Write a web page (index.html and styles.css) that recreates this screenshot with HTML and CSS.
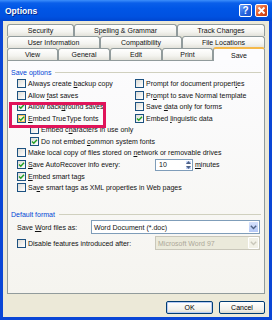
FILE: index.html
```html
<!DOCTYPE html>
<html lang="en">
<head>
    <meta charset="UTF-8">
    <title>Options</title>
    <link rel="stylesheet" href="styles.css">
</head>
<body>
    <div class="window">
        <div class="titlebar">
            <span class="title">Options</span>
            <div class="caption-btns">
                <span class="cbtn help">?</span>
                <span class="cbtn close">
                    <svg width="9" height="9" viewBox="0 0 9 9"><path d="M1.5 1.5 L7.5 7.5 M7.5 1.5 L1.5 7.5" stroke="#fff" stroke-width="1.8"/></svg>
                </span>
            </div>
        </div>

        <div class="client">
            <div class="tabrows">
                <div class="tabrow">
                    <div class="tab" style="width:67px">Security</div>
                    <div class="tab" style="width:103px">Spelling &amp; Grammar</div>
                    <div class="tab" style="width:88px">Track Changes</div>
                </div>
                <div class="tabrow">
                    <div class="tab" style="width:93px">User Information</div>
                    <div class="tab" style="width:82px">Compatibility</div>
                    <div class="tab" style="width:83px">File Locations</div>
                </div>
                <div class="tabrow">
                    <div class="tab" style="width:51px">View</div>
                    <div class="tab" style="width:52px">General</div>
                    <div class="tab" style="width:52px">Edit</div>
                    <div class="tab" style="width:51px">Print</div>
                    <div class="tab selected" style="width:52px">Save</div>
                </div>
            </div>

            <div class="panel">
                <div class="group-title">Save options</div>
                <div class="group">
                    <div class="cols">
                        <div class="col">
                            <div class="row"><span class="cb"></span><span>Always create <u>b</u>ackup copy</span></div>
                            <div class="row"><span class="cb"></span><span>Allow <u>f</u>ast saves</span></div>
                            <div class="row"><span class="cb checked"><svg viewBox="0 0 7 7"><path d="M1 3.4 L2.8 5.2 L6 1.8" fill="none" stroke="#21a121" stroke-width="1.4"/></svg></span><span>Allow back<u>g</u>round saves</span></div>
                            <div class="row"><span class="cb checked hover"><svg viewBox="0 0 7 7"><path d="M1 3.4 L2.8 5.2 L6 1.8" fill="none" stroke="#21a121" stroke-width="1.4"/></svg></span><span><u>E</u>mbed TrueType fonts</span></div>
                        </div>
                        <div class="col">
                            <div class="row"><span class="cb"></span><span>Prompt for document propert<u>i</u>es</span></div>
                            <div class="row"><span class="cb"></span><span>Pr<u>o</u>mpt to save Normal template</span></div>
                            <div class="row"><span class="cb"></span><span>Save <u>d</u>ata only for forms</span></div>
                            <div class="row"><span class="cb checked"><svg viewBox="0 0 7 7"><path d="M1 3.4 L2.8 5.2 L6 1.8" fill="none" stroke="#21a121" stroke-width="1.4"/></svg></span><span>Embed <u>l</u>inguistic data</span></div>
                        </div>
                    </div>
                    <div class="row indent"><span class="cb"></span><span>Embed c<u>h</u>aracters in use only</span></div>
                    <div class="row indent"><span class="cb checked"><svg viewBox="0 0 7 7"><path d="M1 3.4 L2.8 5.2 L6 1.8" fill="none" stroke="#21a121" stroke-width="1.4"/></svg></span><span>Do not embed <u>c</u>ommon system fonts</span></div>
                    <div class="row"><span class="cb"></span><span>Make local copy of files stored on <u>n</u>etwork or removable drives</span></div>
                    <div class="row spin-row">
                        <span class="cb checked"><svg viewBox="0 0 7 7"><path d="M1 3.4 L2.8 5.2 L6 1.8" fill="none" stroke="#21a121" stroke-width="1.4"/></svg></span>
                        <span class="spin-label"><u>S</u>ave AutoRecover info every:</span>
                        <span class="spin">
                            <span class="spin-value">10</span>
                            <span class="spin-btns">
                                <span class="spin-btn"><svg width="5" height="3" viewBox="0 0 5 3"><path d="M0 3 L2.5 0 L5 3Z" fill="#4d6185"/></svg></span>
                                <span class="spin-btn"><svg width="5" height="3" viewBox="0 0 5 3"><path d="M0 0 L2.5 3 L5 0Z" fill="#4d6185"/></svg></span>
                            </span>
                        </span>
                        <span><u>m</u>inutes</span>
                    </div>
                    <div class="row"><span class="cb checked"><svg viewBox="0 0 7 7"><path d="M1 3.4 L2.8 5.2 L6 1.8" fill="none" stroke="#21a121" stroke-width="1.4"/></svg></span><span><u>E</u>mbed smart tags</span></div>
                    <div class="row"><span class="cb"></span><span>Sa<u>v</u>e smart tags as XML properties in Web pages</span></div>
                </div>

                <div class="group-title second">Default format</div>
                <div class="group">
                    <div class="format-row">
                        <span class="format-label">Save <u>W</u>ord files as:</span>
                        <div class="combo wide">
                            <span class="combo-text">Word Document (*.doc)</span>
                            <span class="combo-btn"><svg width="7" height="5" viewBox="0 0 7 5"><path d="M0.8 0.8 L3.5 3.5 L6.2 0.8" fill="none" stroke="#4d6185" stroke-width="1.4"/></svg></span>
                        </div>
                    </div>
                    <div class="format-row second-row">
                        <span class="cb"></span>
                        <span class="disable-label">Disable features introduced after:</span>
                        <div class="combo narrow disabled">
                            <span class="combo-text">Microsoft Word 97</span>
                            <span class="combo-btn"><svg width="7" height="5" viewBox="0 0 7 5"><path d="M0.8 0.8 L3.5 3.5 L6.2 0.8" fill="none" stroke="#c9c7ba" stroke-width="1.4"/></svg></span>
                        </div>
                    </div>
                </div>
            </div>

            <div class="buttons">
                <button class="btn default">OK</button>
                <button class="btn">Cancel</button>
            </div>
        </div>

        <div class="highlight"></div>
    </div>
</body>
</html>
```

FILE: styles.css
```css
* {
    margin: 0;
    padding: 0;
    box-sizing: border-box;
}

body {
    font-family: "Liberation Sans", Arial, sans-serif;
    font-size: 7px;
    color: #111;
    background: #fff;
}

.window {
    width: 272px;
    height: 320px;
    display: flex;
    flex-direction: column;
    background: #0a46d6;
    position: relative;
    overflow: hidden;
}

.titlebar {
    height: 21px;
    flex: none;
    display: flex;
    align-items: center;
    padding: 0 4px 0 5px;
    background: linear-gradient(#3d8ffb 0, #0a5fea 3px, #0056e6 40%, #0051e0 80%, #0046cf 100%);
}

.title {
    flex: 1;
    color: #fff;
    font-weight: bold;
    font-size: 8.5px;
    text-shadow: 1px 1px 0 #0b2a8a;
}

.caption-btns {
    display: flex;
    gap: 3px;
}

.cbtn {
    width: 13px;
    height: 13px;
    border: 1px solid #fff;
    border-radius: 2px;
    display: flex;
    align-items: center;
    justify-content: center;
    color: #fff;
    font-weight: bold;
    font-size: 10px;
}

.help {
    background: linear-gradient(135deg, #6fa2fb, #2463e0 55%, #1a4fc4);
}

.close {
    background: linear-gradient(135deg, #f3a07a, #e2541f 55%, #c23a10);
}

.client {
    flex: 1;
    margin: 0 3px 3px;
    background: #ece9d8;
    padding: 3px 4px 0;
    display: flex;
    flex-direction: column;
}

.tabrow {
    display: flex;
    height: 12px;
    align-items: flex-start;
}

.tab {
    height: 12px;
    flex: none;
    border: 1px solid #919b9c;
    border-bottom: none;
    border-radius: 3px 3px 0 0;
    background: linear-gradient(#fff, #f4f4f0 60%, #e3e2da);
    display: flex;
    align-items: center;
    justify-content: center;
    white-space: nowrap;
}

.tab.selected {
    height: 14px;
    margin-top: -1px;
    background: #fcfcfe;
    border-top: 2px solid #f5b94a;
    position: relative;
    z-index: 1;
}

.panel {
    height: 234px;
    flex: none;
    border: 1px solid #919b9c;
    background: linear-gradient(#fcfcfe, #f5f4ef);
    padding: 6px 3px 0;
}

.group-title {
    display: flex;
    align-items: center;
    gap: 4px;
    height: 10px;
    color: #0046d5;
}

.group-title::after {
    content: "";
    flex: 1;
    height: 1px;
    background: #d0d0bf;
}

.group-title.second {
    margin-top: 15.5px;
}

.group {
    padding-left: 6px;
    margin-top: 1px;
}

.cols {
    display: grid;
    grid-template-columns: 118px 1fr;
}

.row {
    display: flex;
    align-items: center;
    gap: 2px;
    height: 11.5px;
    white-space: nowrap;
}

.row.indent {
    padding-left: 13px;
}

.row.spin-row {
    height: 12px;
}

.cb {
    width: 9px;
    height: 9px;
    flex: none;
    border: 1px solid #1c5180;
    background: linear-gradient(135deg, #dcdcd7, #fff);
    display: flex;
}

.cb svg {
    width: 7px;
    height: 7px;
}

.cb.hover {
    box-shadow: inset 0 0 0 1px #f8c45c;
    background: #fff3d6;
}

.spin-label {
    width: 125px;
}

.spin {
    width: 38px;
    height: 12px;
    display: flex;
    border: 1px solid #7f9db9;
    background: #fff;
}

.spin-value {
    flex: 1;
    padding-left: 3px;
    line-height: 10px;
}

.spin-btns {
    width: 7px;
    display: flex;
    flex-direction: column;
}

.spin-btn {
    flex: 1;
    display: flex;
    align-items: center;
    justify-content: center;
    background: linear-gradient(#d6e2fd, #b9cdf8);
    border: 1px solid #fff;
    border-radius: 1px;
}

.format-row {
    display: flex;
    align-items: center;
    gap: 2px;
    height: 14px;
}

.format-row.second-row {
    margin-top: 2px;
}

.format-label {
    width: 72px;
}

.disable-label {
    width: 125px;
}

.combo {
    height: 14px;
    display: flex;
    align-items: center;
    border: 1px solid #7f9db9;
    background: #fff;
}

.combo.wide {
    width: 169px;
}

.combo.narrow {
    width: 105px;
}

.combo-text {
    flex: 1;
    padding-left: 2px;
    white-space: nowrap;
}

.combo-btn {
    width: 11px;
    height: 12px;
    display: flex;
    align-items: center;
    justify-content: center;
    background: linear-gradient(#d6e2fd, #b4c8f6);
    border: 1px solid #fff;
    border-radius: 1px;
}

.combo.disabled {
    border-color: #c9c7ba;
    background: #ebeadb;
    color: #aca899;
}

.combo.disabled .combo-btn {
    background: #f2f1e7;
}

.buttons {
    display: flex;
    justify-content: flex-end;
    gap: 6px;
    margin-top: 7px;
}

.btn {
    height: 13px;
    width: 46px;
    font-family: inherit;
    font-size: 7px;
    color: #000;
    border: 1px solid #003c74;
    border-radius: 2px;
    background: linear-gradient(#fff, #f1f0eb 70%, #dcd9ce);
}

.btn.default {
    width: 47px;
    box-shadow: inset 0 0 0 1px #b6cbf5;
}

.highlight {
    position: absolute;
    left: 9px;
    top: 102px;
    width: 97px;
    height: 26px;
    border: 3px solid #e0145a;
}
```
